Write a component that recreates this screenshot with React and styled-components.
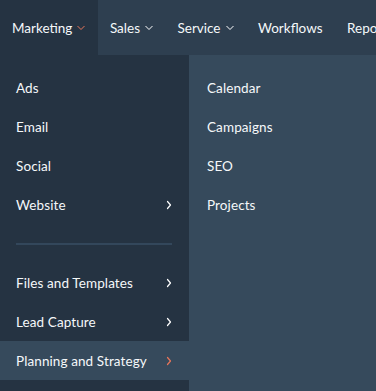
import React from 'react';
import styled, { createGlobalStyle } from 'styled-components';

const GlobalStyle = createGlobalStyle`
  html, body {
    margin: 0;
    padding: 0;
    background: #364a5c;
  }
  body {
    font-family: Lato, "Noto Sans", "Liberation Sans", sans-serif;
    -webkit-font-smoothing: antialiased;
  }
`;

const Page = styled.div`
  width: 376px;
  height: 391px;
  overflow: hidden;
  display: flex;
  flex-direction: column;
  background: #364a5c;
`;

const Nav = styled.nav`
  display: flex;
  height: 55px;
  background: #2e3f50;
  flex-shrink: 0;
  white-space: nowrap;
`;

const NavItem = styled.div`
  display: flex;
  align-items: center;
  gap: 5px;
  padding: 0 12.5px 0 12px;
  background: ${(p) => (p.$active ? '#253342' : 'transparent')};
  color: #f5f8fa;
  font-size: 13.5px;
`;

const Menu = styled.div`
  flex: 1;
  display: grid;
  grid-template-columns: 189px 1fr;
`;

const Column = styled.ul`
  list-style: none;
  margin: 0;
  padding: 13px 0 0;
  background: ${(p) => (p.$dark ? '#253342' : '#364a5c')};
`;

const Row = styled.li`
  height: 39px;
  display: flex;
  align-items: center;
  justify-content: space-between;
  padding: ${(p) => (p.$sub ? '0 18px' : '0 17px 0 16px')};
  color: #f5f8fa;
  font-size: 13.5px;
  letter-spacing: 0.1px;
  background: ${(p) => (p.$active ? '#364a5c' : 'transparent')};
`;

const Divider = styled.li`
  height: 39px;
  display: flex;
  align-items: center;
  padding: 0 17px 0 16px;
  &::before {
    content: '';
    flex: 1;
    height: 2px;
    background: #33475b;
  }
`;

const Chevron = ({ dir = 'down', color = '#fff' }) =>
  dir === 'down' ? (
    <svg width="8" height="6" viewBox="0 0 8 6" fill="none">
      <path d="M0.8 1.3l3.2 3.2 3.2-3.2" stroke={color} strokeWidth="1" strokeLinecap="round" strokeLinejoin="round" />
    </svg>
  ) : (
    <svg width="6" height="10" viewBox="0 0 6 10" fill="none">
      <path d="M1.5 1.5l3 3.5-3 3.5" stroke={color} strokeWidth="1.2" strokeLinecap="round" strokeLinejoin="round" />
    </svg>
  );

const ORANGE = '#e8765a';

const navItems = [
  { label: 'Marketing', menu: true, active: true },
  { label: 'Sales', menu: true },
  { label: 'Service', menu: true },
  { label: 'Workflows' },
  { label: 'Reports' },
];

const mainItems = [
  { label: 'Ads' },
  { label: 'Email' },
  { label: 'Social' },
  { label: 'Website', more: true },
  { divider: true },
  { label: 'Files and Templates', more: true },
  { label: 'Lead Capture', more: true },
  { label: 'Planning and Strategy', more: true, active: true },
];

const subItems = ['Calendar', 'Campaigns', 'SEO', 'Projects'];

export default function App() {
  return (
    <Page>
      <GlobalStyle />
      <Nav>
        {navItems.map((n) => (
          <NavItem key={n.label} $active={n.active}>
            {n.label}
            {n.menu && <Chevron color={n.active ? ORANGE : '#fff'} />}
          </NavItem>
        ))}
      </Nav>
      <Menu>
        <Column $dark>
          {mainItems.map((m, i) =>
            m.divider ? (
              <Divider key={i} />
            ) : (
              <Row key={m.label} $active={m.active}>
                {m.label}
                {m.more && <Chevron dir="right" color={m.active ? ORANGE : '#fff'} />}
              </Row>
            )
          )}
        </Column>
        <Column>
          {subItems.map((s) => (
            <Row key={s} $sub>
              {s}
            </Row>
          ))}
        </Column>
      </Menu>
    </Page>
  );
}
